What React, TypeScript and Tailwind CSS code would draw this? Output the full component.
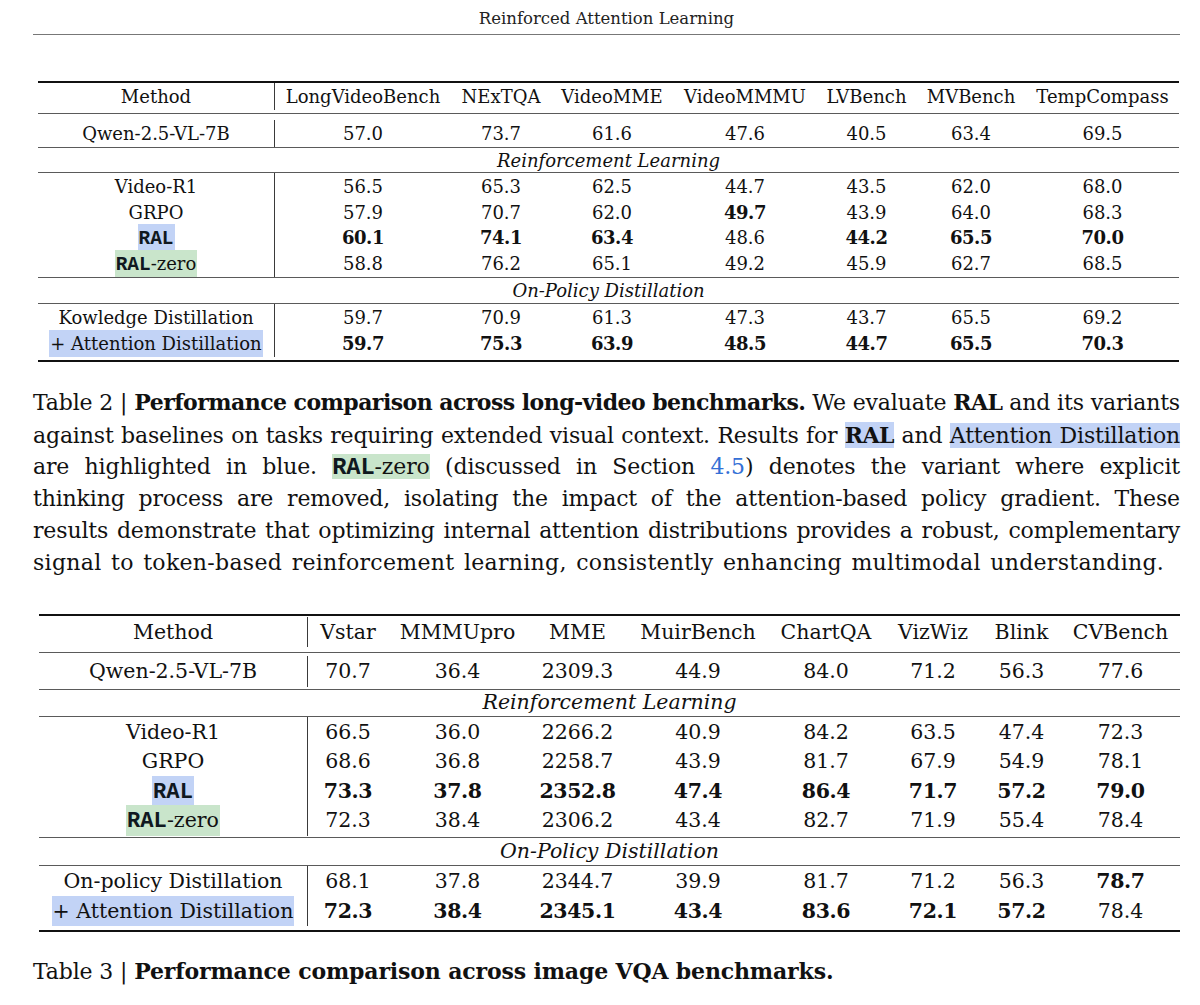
import React from "react";

type Cell = { v: string; b?: boolean };

const T1_COLS = "grid grid-cols-[237px_176px_100px_122px_144px_99px_110px_153px]";
const T2_COLS = "grid grid-cols-[269px_80px_139px_101px_140px_116px_98px_79px_119px]";

const c = (s: string): Cell[] =>
  s.split(" ").map((x) => (x.startsWith("*") ? { v: x.slice(1), b: true } : { v: x }));

function Row({
  cols,
  h,
  method,
  cells,
}: {
  cols: string;
  h: string;
  method: React.ReactNode;
  cells: Cell[];
}) {
  return (
    <div className={`${cols} ${h}`}>
      <div className="flex items-center justify-center border-r border-[#3a3a3a] whitespace-nowrap">
        {method}
      </div>
      {cells.map((cell, i) => (
        <div
          key={i}
          className={`flex items-center justify-center whitespace-nowrap ${
            cell.b ? "font-bold tracking-[-0.4px]" : ""
          }`}
        >
          {cell.v}
        </div>
      ))}
    </div>
  );
}

const Mono = ({ children }: { children: React.ReactNode }) => (
  <span className="font-['Liberation_Mono','Courier_New',monospace] font-bold text-[1.08em] leading-none text-[#101820]">
    {children}
  </span>
);

const RalBlue = () => (
  <span className="bg-[#c2d3f6] px-[1px]">
    <Mono>RAL</Mono>
  </span>
);
const RalZero = () => (
  <span className="bg-[#c9e5cb] px-[1px]">
    <Mono>RAL</Mono>-zero
  </span>
);
const AttDist = () => <span className="bg-[#c2d3f6] px-[1px]">+ Attention Distillation</span>;

function Table1() {
  return (
    <div className="ml-[5px] w-[1141px] text-[18px] text-[#111]">
      <div className="h-[2px] bg-[#111]" />
      <Row
        cols={T1_COLS}
        h="h-[24px]"
        method="Method"
        cells={c("LongVideoBench NExTQA VideoMME VideoMMMU LVBench MVBench TempCompass")}
      />
      <div className="h-[6px]" />
      <div className="h-px bg-[#5a5a5a]" />
      <div className="h-[6px]" />
      <Row cols={T1_COLS} h="h-[27px]" method="Qwen-2.5-VL-7B" cells={c("57.0 73.7 61.6 47.6 40.5 63.4 69.5")} />
      <div className="h-px bg-[#5a5a5a]" />
      <div className="h-[24px] flex items-center justify-center italic">Reinforcement Learning</div>
      <div className="h-px bg-[#5a5a5a]" />
      <Row cols={T1_COLS} h="h-[25.6px]" method="Video-R1" cells={c("56.5 65.3 62.5 44.7 43.5 62.0 68.0")} />
      <Row cols={T1_COLS} h="h-[25.6px]" method="GRPO" cells={c("57.9 70.7 62.0 *49.7 43.9 64.0 68.3")} />
      <Row
        cols={T1_COLS}
        h="h-[25.6px]"
        method={<RalBlue />}
        cells={c("*60.1 *74.1 *63.4 48.6 *44.2 *65.5 *70.0")}
      />
      <Row cols={T1_COLS} h="h-[25.6px]" method={<RalZero />} cells={c("58.8 76.2 65.1 49.2 45.9 62.7 68.5")} />
      <div className="h-[1.6px]" />
      <div className="h-[1.5px] bg-[#5a5a5a]" />
      <div className="h-[25px] flex items-center justify-center italic">On-Policy Distillation</div>
      <div className="h-px bg-[#5a5a5a]" />
      <Row
        cols={T1_COLS}
        h="h-[25.6px]"
        method="Kowledge Distillation"
        cells={c("59.7 70.9 61.3 47.3 43.7 65.5 69.2")}
      />
      <Row
        cols={T1_COLS}
        h="h-[25.6px]"
        method={<AttDist />}
        cells={c("*59.7 *75.3 *63.9 *48.5 *44.7 *65.5 *70.3")}
      />
      <div className="h-[4.8px]" />
      <div className="h-[2px] bg-[#111]" />
    </div>
  );
}

function Table2() {
  return (
    <div className="ml-[6px] w-[1141px] text-[20.5px] text-[#111]">
      <div className="h-[2px] bg-[#111]" />
      <div className="h-[1px]" />
      <Row
        cols={T2_COLS}
        h="h-[28px]"
        method="Method"
        cells={c("Vstar MMMUpro MME MuirBench ChartQA VizWiz Blink CVBench")}
      />
      <div className="h-[7px]" />
      <div className="h-px bg-[#5a5a5a]" />
      <div className="h-[3px]" />
      <Row
        cols={T2_COLS}
        h="h-[31px]"
        method="Qwen-2.5-VL-7B"
        cells={c("70.7 36.4 2309.3 44.9 84.0 71.2 56.3 77.6")}
      />
      <div className="h-[2px]" />
      <div className="h-px bg-[#5a5a5a]" />
      <div className="h-[26.5px] flex items-center justify-center italic">Reinforcement Learning</div>
      <div className="h-px bg-[#5a5a5a]" />
      <Row cols={T2_COLS} h="h-[29.4px]" method="Video-R1" cells={c("66.5 36.0 2266.2 40.9 84.2 63.5 47.4 72.3")} />
      <Row cols={T2_COLS} h="h-[29.4px]" method="GRPO" cells={c("68.6 36.8 2258.7 43.9 81.7 67.9 54.9 78.1")} />
      <Row
        cols={T2_COLS}
        h="h-[29.4px]"
        method={<RalBlue />}
        cells={c("*73.3 *37.8 *2352.8 *47.4 *86.4 *71.7 *57.2 *79.0")}
      />
      <Row
        cols={T2_COLS}
        h="h-[29.4px]"
        method={<RalZero />}
        cells={c("72.3 38.4 2306.2 43.4 82.7 71.9 55.4 78.4")}
      />
      <div className="h-[2px]" />
      <div className="h-[1.5px] bg-[#5a5a5a]" />
      <div className="h-[27px] flex items-center justify-center italic">On-Policy Distillation</div>
      <div className="h-px bg-[#5a5a5a]" />
      <Row
        cols={T2_COLS}
        h="h-[29.4px]"
        method="On-policy Distillation"
        cells={c("68.1 37.8 2344.7 39.9 81.7 71.2 56.3 *78.7")}
      />
      <Row
        cols={T2_COLS}
        h="h-[29.4px]"
        method={<AttDist />}
        cells={c("*72.3 *38.4 *2345.1 *43.4 *83.6 *72.1 *57.2 78.4")}
      />
      <div className="h-[5.5px]" />
      <div className="h-[2px] bg-[#111]" />
    </div>
  );
}

const J = "h-[32.2px] text-justify [text-align-last:justify] whitespace-nowrap";

export default function App() {
  return (
    <div className="min-h-[1005px] w-[1200px] bg-white font-['DejaVu_Serif',serif] text-[#111]">
      <div className="ml-[33px] w-[1147px]">
        <div className="h-[34px] pt-[4px] flex items-center justify-center text-[16.5px] text-[#222]">
          Reinforced Attention Learning
        </div>
        <div className="h-px bg-[#777]" />
        <div className="h-[46px]" />
        <Table1 />
        <div className="mt-[24px] text-[22px] leading-[32.2px] tracking-[-0.15px]">
          <div className={J}>
            Table 2 | <b className="tracking-[-0.55px]">Performance comparison across long-video benchmarks.</b> We
            evaluate <b className="tracking-[-0.55px]">RAL</b> and its variants
          </div>
          <div className={J}>
            against baselines on tasks requiring extended visual context. Results for{" "}
            <b className="bg-[#c2d3f6] tracking-[-0.55px]">RAL</b> and{" "}
            <span className="bg-[#c2d3f6]">Attention Distillation</span>
          </div>
          <div className={J}>
            are highlighted in blue.{"  "}
            <span className="bg-[#c9e5cb]">
              <Mono>RAL</Mono>-zero
            </span>{" "}
            (discussed in Section <span className="text-[#3470d6]">4.5</span>) denotes the variant where explicit
          </div>
          <div className={J}>
            thinking process are removed, isolating the impact of the attention-based policy gradient. These
          </div>
          <div className={J}>
            results demonstrate that optimizing internal attention distributions provides a robust, complementary
          </div>
          <div className="h-[32.2px] whitespace-nowrap tracking-[0.3px] [word-spacing:2.2px]">
            signal to token-based reinforcement learning, consistently enhancing multimodal understanding.
          </div>
        </div>
        <div className="h-[34px]" />
        <Table2 />
        <div className="mt-[23px] h-[32px] text-[22px] leading-[32px] whitespace-nowrap tracking-[-0.15px]">
          Table 3 | <b className="tracking-[-0.15px]">Performance comparison across image VQA benchmarks.</b>
        </div>
      </div>
    </div>
  );
}
